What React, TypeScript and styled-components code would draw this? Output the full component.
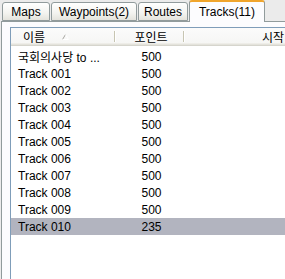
import styled, { createGlobalStyle } from 'styled-components';

const GlobalStyle = createGlobalStyle`
  html, body {
    margin: 0;
    padding: 0;
    background: #ebebeb;
  }
  body {
    font-family: "Liberation Sans", "Noto Sans CJK KR", sans-serif;
    font-size: 12px;
    color: #000;
  }
`;

const Window = styled.div`
  width: 285px;
  height: 279px;
  display: flex;
  flex-direction: column;
  overflow: hidden;
  background: #ebebeb;
`;

const TabStrip = styled.div`
  display: flex;
  align-items: flex-end;
  height: 21px;
  padding-left: 2px;
  position: relative;
  z-index: 1;
`;

const Tab = styled.div<{ $active?: boolean; $w: number }>`
  box-sizing: border-box;
  width: ${(p) => p.$w}px;
  height: ${(p) => (p.$active ? 22 : 19)}px;
  margin-right: ${(p) => (p.$active ? 0 : 1)}px;
  margin-bottom: ${(p) => (p.$active ? -1 : 0)}px;
  display: flex;
  align-items: center;
  justify-content: center;
  padding-top: ${(p) => (p.$active ? 0 : 1)}px;
  border: 1px solid #919b9c;
  border-bottom: ${(p) => (p.$active ? 'none' : '1px solid #919b9c')};
  border-top: ${(p) => (p.$active ? '2px solid #f0a52c' : '1px solid #919b9c')};
  border-radius: 3px 3px 0 0;
  background: ${(p) =>
    p.$active ? '#fcfcfe' : 'linear-gradient(#ffffff, #f3f3ef 60%, #e4e3dc)'};
  white-space: nowrap;
`;

const Panel = styled.div`
  flex: 1;
  display: flex;
  flex-direction: column;
  min-height: 0;
  background: #fcfcfe;
  border-left: 1px solid #919b9c;
  border-top: 1px solid #919b9c;
  margin-left: 1px;
  padding: 5px 0 0 8px;
`;

const ListView = styled.div`
  flex: 1;
  display: flex;
  flex-direction: column;
  background: #fff;
  border-left: 1px solid #7f9db9;
  border-top: 1px solid #7f9db9;
`;

const Header = styled.div`
  display: flex;
  height: 18px;
  flex-shrink: 0;
  background: linear-gradient(#fbfbfb, #f5f5f3);
  box-shadow: inset 0 -1px 0 #d6d5cd, inset 0 -2px 0 #e4e3dc, inset 0 -3px 0 #eeede8;
`;

const HeaderCell = styled.div<{ $w: number; $align?: string; $pad?: number }>`
  box-sizing: border-box;
  width: ${(p) => p.$w}px;
  flex-shrink: 0;
  display: flex;
  align-items: center;
  justify-content: ${(p) => p.$align || 'flex-start'};
  padding-left: ${(p) => p.$pad || 0}px;
  padding-bottom: 2px;
  position: relative;
  white-space: nowrap;

  &:not(:last-child)::after {
    content: '';
    position: absolute;
    right: 0;
    top: 3px;
    height: 11px;
    width: 1px;
    background: #c7c5b2;
    box-shadow: 1px 0 0 #fff;
  }
`;

const SortArrow = styled.svg`
  margin-left: 17px;
  margin-top: 1px;
`;

const Rows = styled.div`
  padding-top: 2px;
`;

const Row = styled.div<{ $selected?: boolean }>`
  display: flex;
  height: 17px;
  align-items: center;
  background: ${(p) => (p.$selected ? '#b2b4bf' : 'transparent')};
`;

const NameCell = styled.div`
  box-sizing: border-box;
  width: 104px;
  padding-left: 7px;
  white-space: nowrap;
  overflow: hidden;
`;

const PointCell = styled.div`
  box-sizing: border-box;
  width: 72px;
  text-align: center;
  padding-left: 1px;
`;

const tabs = [
  { label: 'Maps', w: 48 },
  { label: 'Waypoints(2)', w: 86 },
  { label: 'Routes', w: 50 },
  { label: 'Tracks(11)', w: 76, active: true },
];

const tracks = [
  { name: '국회의사당 to ...', points: 500 },
  { name: 'Track 001', points: 500 },
  { name: 'Track 002', points: 500 },
  { name: 'Track 003', points: 500 },
  { name: 'Track 004', points: 500 },
  { name: 'Track 005', points: 500 },
  { name: 'Track 006', points: 500 },
  { name: 'Track 007', points: 500 },
  { name: 'Track 008', points: 500 },
  { name: 'Track 009', points: 500 },
  { name: 'Track 010', points: 235, selected: true },
];

const App = () => {
  return (
    <>
      <GlobalStyle />
      <Window>
        <TabStrip>
          {tabs.map((t) => (
            <Tab key={t.label} $w={t.w} $active={t.active}>
              {t.label}
            </Tab>
          ))}
        </TabStrip>
        <Panel>
          <ListView>
            <Header>
              <HeaderCell $w={104} $pad={12}>
                이름
                <SortArrow width="7" height="6" viewBox="0 0 7 6">
                  <path d="M0.5 5.5 L3.5 0.5" stroke="#a7a6a0" fill="none" />
                  <path d="M3.5 0.5 L6.5 5.5 L0.5 5.5" stroke="#ffffff" fill="none" />
                </SortArrow>
              </HeaderCell>
              <HeaderCell $w={69} $align="center" $pad={3}>
                포인트
              </HeaderCell>
              <HeaderCell $w={160} $pad={78}>
                시작
              </HeaderCell>
            </Header>
            <Rows>
              {tracks.map((r) => (
                <Row key={r.name} $selected={r.selected}>
                  <NameCell>{r.name}</NameCell>
                  <PointCell>{r.points}</PointCell>
                </Row>
              ))}
            </Rows>
          </ListView>
        </Panel>
      </Window>
    </>
  );
};

export default App;
